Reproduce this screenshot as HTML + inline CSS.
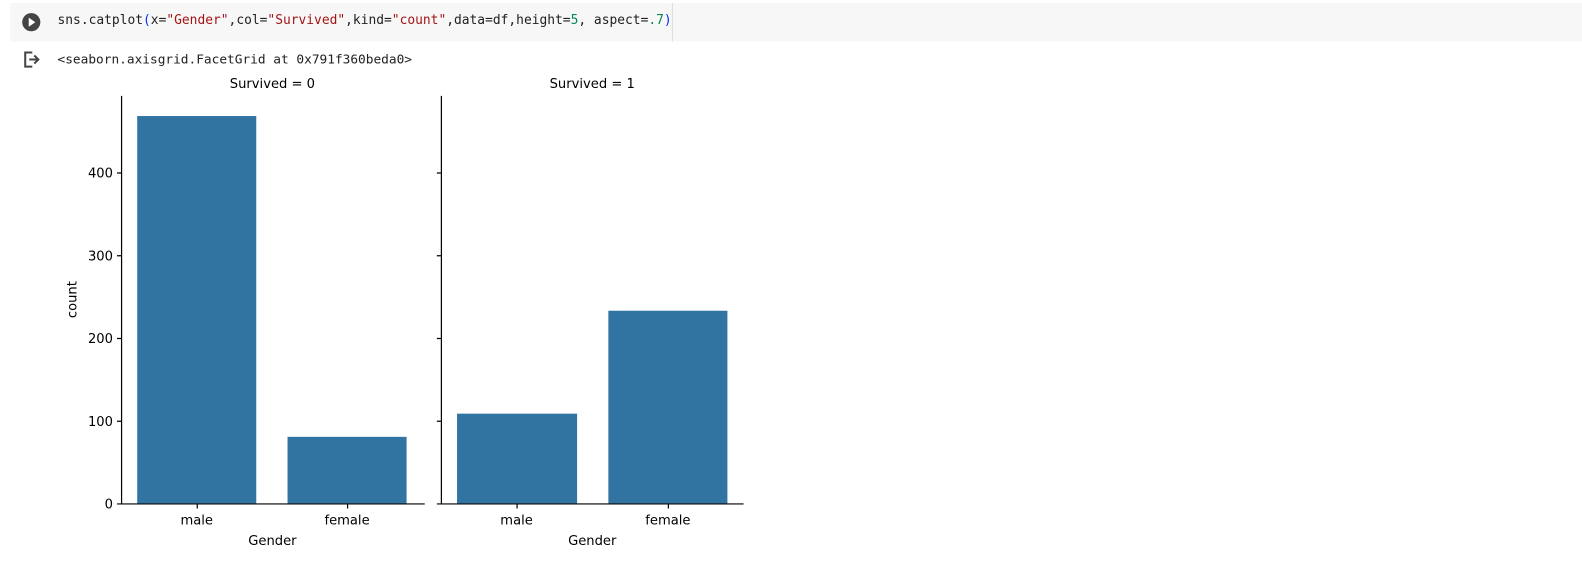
<!DOCTYPE html>
<html><head><style>
body{margin:0;width:1582px;height:575px;background:#fff;position:relative;overflow:hidden;font-family:"DejaVu Sans Mono","Liberation Mono",monospace}
#w{position:absolute;left:0;top:0;width:1568px;height:570px;transform:scale(1.0089);transform-origin:0 0}
.cell{position:absolute;left:10px;top:3px;width:1558px;height:38px;background:#f7f7f7}
.sep{position:absolute;left:666px;top:3px;width:1px;height:38px;background:#ddd}
.code{position:absolute;left:57px;top:13px;font-size:12.8px;color:#212121;white-space:pre}
.s{color:#a31515}.n{color:#098658}.p{color:#0431fa}
.out{position:absolute;left:57px;top:51px;font-size:12.7px;color:#212121}
</style></head><body><div id="w">
<div class="cell"></div><div class="sep"></div>
<svg style="position:absolute;left:21px;top:12px" width="20" height="20"><circle cx="10" cy="10" r="9" fill="#444"/><path d="M7.5 5.5L14 10L7.5 14.5Z" fill="#fff"/></svg>
<div class="code">sns.catplot<span class="p">(</span>x=<span class="s">"Gender"</span>,col=<span class="s">"Survived"</span>,kind=<span class="s">"count"</span>,data=df,height=<span class="n">5</span>, aspect=<span class="n">.7</span><span class="p">)</span></div>
<svg style="position:absolute;left:21px;top:49px" width="20" height="20"><path d="M11 3H4v14h7" fill="none" stroke="#444" stroke-width="2"/><path d="M8 10h9M13 6l4 4-4 4" fill="none" stroke="#444" stroke-width="2"/></svg>
<div class="out">&lt;seaborn.axisgrid.FacetGrid at 0x791f360beda0&gt;</div>
<svg style="position:absolute;left:0;top:0" width="1568" height="570" font-family="DejaVu Sans, Liberation Sans, sans-serif" font-size="13">
<g fill="#3274a1">
<rect x="136" y="115" width="118" height="384"/>
<rect x="285" y="433" width="118" height="66"/>
<rect x="453" y="410" width="119" height="89"/>
<rect x="603" y="308" width="118" height="191"/>
</g>
<g stroke="#000" stroke-width="1.2" fill="none">
<path d="M120.5 95V499.5H421"/>
<path d="M437.5 95V499.5H737"/>
<path d="M116 499.5h4M116 417.5h4M116 335.5h4M116 253.5h4M116 171.5h4"/>
<path d="M433 499.5h4M433 417.5h4M433 335.5h4M433 253.5h4M433 171.5h4"/>
<path d="M195.5 500v4M344.5 500v4M512.5 500v4M662.5 500v4"/>
</g>
<g fill="#000" text-anchor="end">
<text x="112" y="504">0</text><text x="112" y="422">100</text><text x="112" y="340">200</text><text x="112" y="258">300</text><text x="112" y="176">400</text>
</g>
<g fill="#000" text-anchor="middle">
<text x="195" y="520">male</text><text x="344" y="520">female</text>
<text x="512" y="520">male</text><text x="662" y="520">female</text>
<text x="270" y="540">Gender</text><text x="587" y="540">Gender</text>
<text x="270" y="87">Survived = 0</text><text x="587" y="87">Survived = 1</text>
<text transform="translate(76,297) rotate(-90)">count</text>
</g>
</svg>
</div></body></html>
